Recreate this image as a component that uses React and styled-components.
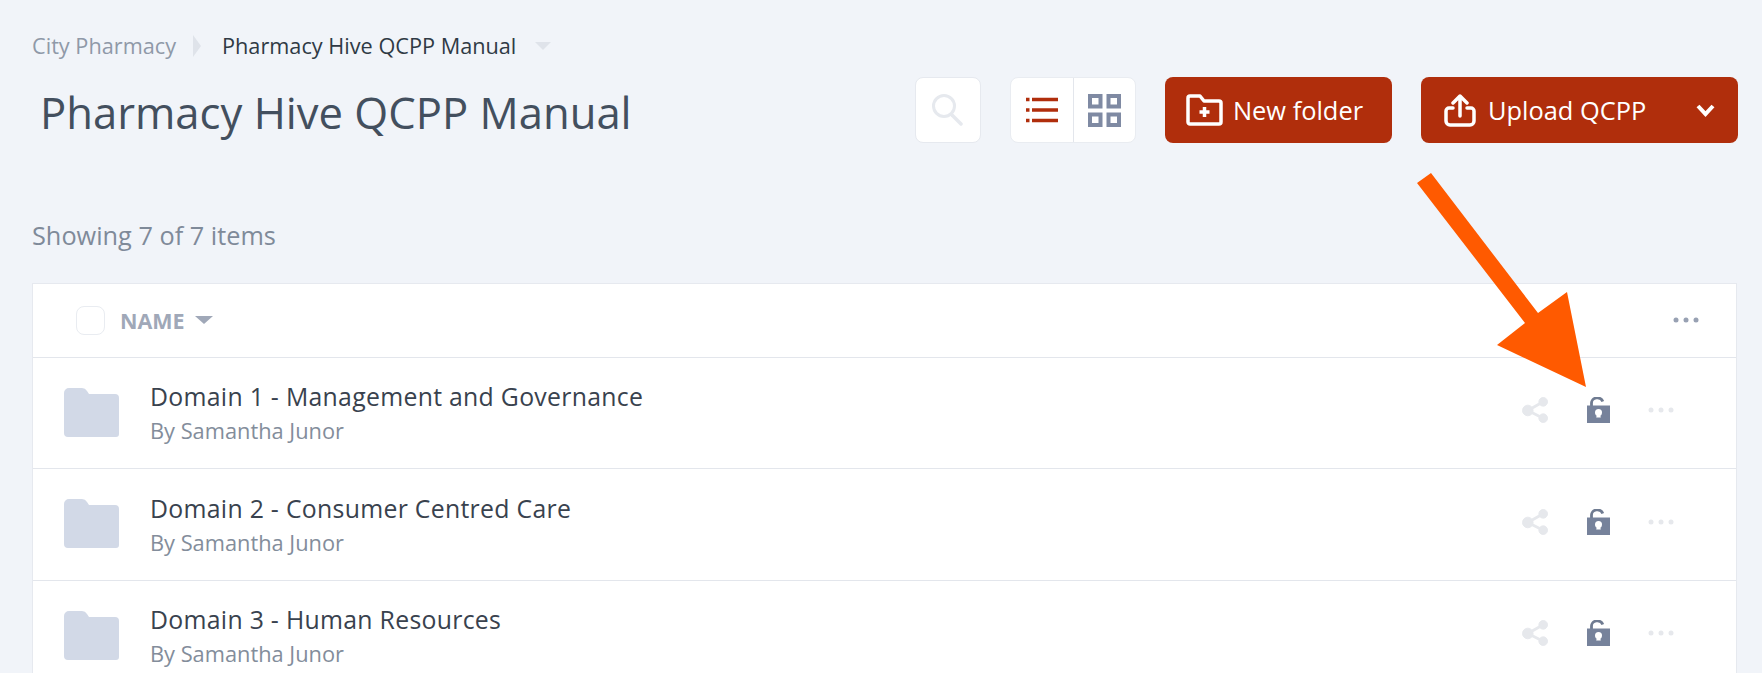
import React from "react";
import styled, { createGlobalStyle } from "styled-components";

const GlobalStyle = createGlobalStyle`
  html, body {
    margin: 0;
    height: 100%;
    background: #f1f4f9;
    overflow: hidden;
  }
  * {
    box-sizing: border-box;
  }
`;

const Page = styled.div`
  position: relative;
  height: 673px;
  overflow: hidden;
  padding: 32px 25px 0 32px;
  background: #f1f4f9;
  font-family: "Open Sans", "Liberation Sans", sans-serif;
`;

const Breadcrumb = styled.div`
  display: flex;
  align-items: center;
  height: 28px;
  font-size: 21.7px;
  line-height: 28px;
`;

const Crumb = styled.span`
  color: ${({ current }) => (current ? "#2f3a45" : "#8f99a8")};
`;

const CrumbSeparator = styled.span`
  width: 0;
  height: 0;
  margin: 0 21px 0 17px;
  border-left: 8px solid #dfe3ea;
  border-top: 11px solid transparent;
  border-bottom: 11px solid transparent;
`;

const CrumbCaret = styled.span`
  width: 0;
  height: 0;
  margin-left: 19px;
  border-top: 8px solid #dfe3ea;
  border-left: 8px solid transparent;
  border-right: 8px solid transparent;
`;

const Header = styled.div`
  display: flex;
  align-items: center;
  margin: 17px -1px 0 0;
  height: 66px;
`;

const Title = styled.h1`
  flex: 1;
  margin: 4px 0 0 8px;
  font-size: 43.6px;
  font-weight: 400;
  line-height: 62px;
  color: #434f5e;
`;

const IconButton = styled.button`
  display: flex;
  align-items: center;
  justify-content: center;
  width: ${({ width }) => width}px;
  height: 66px;
  padding: 0;
  background: #fff;
  border: 1px solid #e6e9ef;
  border-radius: 8px;
`;

const ToggleGroup = styled.div`
  display: flex;
  margin-left: 29px;
  background: #fff;
  border: 1px solid #e9ecf1;
  border-radius: 8px;
`;

const ToggleItem = styled.div`
  display: flex;
  align-items: center;
  justify-content: center;
  width: 62px;
  height: 64px;
  & + & {
    border-left: 1px solid #e3e6ec;
  }
`;

const PrimaryButton = styled.button`
  display: flex;
  align-items: center;
  width: ${({ width }) => width}px;
  height: 66px;
  margin-left: ${({ gap }) => gap}px;
  padding: 0 ${({ padRight }) => padRight || 0}px 0 ${({ padLeft }) => padLeft}px;
  background: #b02e0c;
  border: 0;
  border-radius: 8px;
  color: #fff;
  font-family: inherit;
  font-size: 25.4px;
`;

const ButtonLabel = styled.span`
  flex: ${({ grow }) => (grow ? 1 : "none")};
  margin-left: ${({ gap }) => gap}px;
  text-align: left;
`;

const Showing = styled.div`
  margin-top: 77px;
  font-size: 25.3px;
  line-height: 30px;
  color: #7f8a99;
`;

const Table = styled.div`
  margin-top: 33px;
  background: #fff;
  border: 1px solid #e6e9ef;
`;

const TableHead = styled.div`
  display: flex;
  align-items: center;
  height: 73.5px;
  padding: 0 37px 0 43px;
  border-bottom: 1px solid #e3e6ec;
`;

const Checkbox = styled.span`
  width: 29px;
  height: 29px;
  background: #fff;
  border: 1px solid #e9ecf1;
  border-radius: 8px;
`;

const SortLabel = styled.span`
  margin-left: 15px;
  font-size: 21.5px;
  font-weight: 700;
  color: #a0a8b8;
`;

const SortCaret = styled.span`
  width: 0;
  height: 0;
  margin-left: 10px;
  border-top: 8px solid #a0a8b8;
  border-left: 9px solid transparent;
  border-right: 9px solid transparent;
`;

const Spacer = styled.div`
  flex: 1;
`;

const Row = styled.div`
  display: flex;
  align-items: center;
  height: 111.5px;
  padding: 0 62px 0 31px;
  border-bottom: 1px solid #e3e6ec;
`;

const RowText = styled.div`
  flex: 1;
  margin-left: 31px;
`;

const RowName = styled.div`
  font-size: 24.8px;
  line-height: 34px;
  letter-spacing: 0.3px;
  color: #39424e;
`;

const RowAuthor = styled.div`
  margin-top: 3px;
  font-size: 21.8px;
  line-height: 30px;
  color: #838d9b;
`;

const RowActions = styled.div`
  display: flex;
  align-items: center;
  gap: 38px;
  margin-bottom: 5px;
`;

const ArrowOverlay = styled.svg`
  position: absolute;
  top: 0;
  left: 0;
  pointer-events: none;
`;

const SearchIcon = () => (
  <svg width="32" height="32" viewBox="0 0 32 32" fill="none" stroke="#e6e9ee">
    <circle cx="12" cy="12" r="10.500" strokeWidth="3" />
    <path d="M20 21l9 9" strokeWidth="3.500" strokeLinecap="round" />
  </svg>
);

const ListIcon = () => (
  <svg width="32" height="26" viewBox="0 0 32 26" fill="none" stroke="#b02e0c" strokeWidth="3.500">
    <path d="M6 2.500h26M6 13h26M6 23.500h26" />
    <path d="M0 2.500h3.500M0 13h3.500M0 23.500h3.500" />
  </svg>
);

const GridIcon = () => (
  <svg width="33" height="33" viewBox="0 0 33 33" fill="none" stroke="#7f8aa3" strokeWidth="4">
    <rect x="2" y="2" width="10.500" height="10.500" />
    <rect x="20.500" y="2" width="10.500" height="10.500" />
    <rect x="2" y="20.500" width="10.500" height="10.500" />
    <rect x="20.500" y="20.500" width="10.500" height="10.500" />
  </svg>
);

const FolderPlusIcon = () => (
  <svg width="37" height="32" viewBox="0 0 37 32" fill="none" stroke="#fff" strokeWidth="3.500">
    <path d="M2 4a2 2 0 0 1 2-2h10l4 5h15a2 2 0 0 1 2 2v19a2 2 0 0 1-2 2H4a2 2 0 0 1-2-2z" strokeLinejoin="round" />
    <path d="M18.500 13v10M13.500 18h10" />
  </svg>
);

const UploadIcon = () => (
  <svg width="32" height="33" viewBox="0 0 32 33" fill="none" stroke="#fff" strokeWidth="3.500" strokeLinecap="round" strokeLinejoin="round">
    <path d="M16 22V2M9 9l7-7 7 7" />
    <path d="M9 14H5a3 3 0 0 0-3 3v10a4 4 0 0 0 4 4h20a4 4 0 0 0 4-4V17a3 3 0 0 0-3-3h-4" />
  </svg>
);

const ChevronIcon = () => (
  <svg width="19" height="13" viewBox="0 0 19 13" fill="none" stroke="#fff" strokeWidth="4">
    <path d="M2 2l7.500 8L17 2" />
  </svg>
);

const FolderIcon = () => (
  <svg width="55" height="50" viewBox="0 0 55 50">
    <path d="M0 5a5 5 0 0 1 5-5h13a6 6 0 0 1 5 3l2 3h26a4 4 0 0 1 4 4v36a3 3 0 0 1-3 3H4a4 4 0 0 1-4-4z" fill="#d2d9e7" />
  </svg>
);

const ShareIcon = () => (
  <svg width="27" height="26" viewBox="0 0 28 27" fill="#e6e8ec" stroke="#e6e8ec">
    <circle cx="6" cy="14" r="5.500" />
    <circle cx="22" cy="5" r="4.500" />
    <circle cx="22" cy="22" r="4.500" />
    <path d="M6 14L22 5M6 14l16 8" strokeWidth="3" fill="none" />
  </svg>
);

const LockIcon = () => (
  <svg width="23" height="26" viewBox="0 0 23 26">
    <path d="M4.500 9V6.500A5.800 5.300 0 0 1 15.800 4.500" fill="none" stroke="#6f7b91" strokeWidth="2.800" />
    <path d="M0 8.500h23v17.500H0z" fill="#76829b" />
    <circle cx="11.500" cy="15.500" r="3.500" fill="#fff" />
    <path d="M10 17h3l.8 3.500h-4.600z" fill="#fff" />
  </svg>
);

const Dots = ({ color }) => (
  <svg width="26" height="6" viewBox="0 0 26 6" fill={color}>
    <circle cx="3" cy="3" r="2.500" />
    <circle cx="13" cy="3" r="2.500" />
    <circle cx="23" cy="3" r="2.500" />
  </svg>
);

const folders = [
  "Domain 1 - Management and Governance",
  "Domain 2 - Consumer Centred Care",
  "Domain 3 - Human Resources",
];

export default function App() {
  return (
    <Page>
      <GlobalStyle />
      <Breadcrumb>
        <Crumb>City Pharmacy</Crumb>
        <CrumbSeparator />
        <Crumb current>Pharmacy Hive QCPP Manual</Crumb>
        <CrumbCaret />
      </Breadcrumb>
      <Header>
        <Title>Pharmacy Hive QCPP Manual</Title>
        <IconButton width={66}>
          <SearchIcon />
        </IconButton>
        <ToggleGroup>
          <ToggleItem>
            <ListIcon />
          </ToggleItem>
          <ToggleItem>
            <GridIcon />
          </ToggleItem>
        </ToggleGroup>
        <PrimaryButton width={227} gap={29} padLeft={21}>
          <FolderPlusIcon />
          <ButtonLabel gap={10}>New folder</ButtonLabel>
        </PrimaryButton>
        <PrimaryButton width={317} gap={29} padLeft={23} padRight={23}>
          <UploadIcon />
          <ButtonLabel grow gap={12}>Upload QCPP</ButtonLabel>
          <ChevronIcon />
        </PrimaryButton>
      </Header>
      <Showing>Showing 7 of 7 items</Showing>
      <Table>
        <TableHead>
          <Checkbox />
          <SortLabel>NAME</SortLabel>
          <SortCaret />
          <Spacer />
          <Dots color="#98a1b3" />
        </TableHead>
        {folders.map((name) => (
          <Row key={name}>
            <FolderIcon />
            <RowText>
              <RowName>{name}</RowName>
              <RowAuthor>By Samantha Junor</RowAuthor>
            </RowText>
            <RowActions>
              <ShareIcon />
              <LockIcon />
              <Dots color="#e6e8ec" />
            </RowActions>
          </Row>
        ))}
      </Table>
      <ArrowOverlay width="1762" height="673">
        <polygon points="1417,183 1431,173 1538,313 1567,292 1586,387 1497,345 1525,323" fill="#ff5a00" />
      </ArrowOverlay>
    </Page>
  );
}
